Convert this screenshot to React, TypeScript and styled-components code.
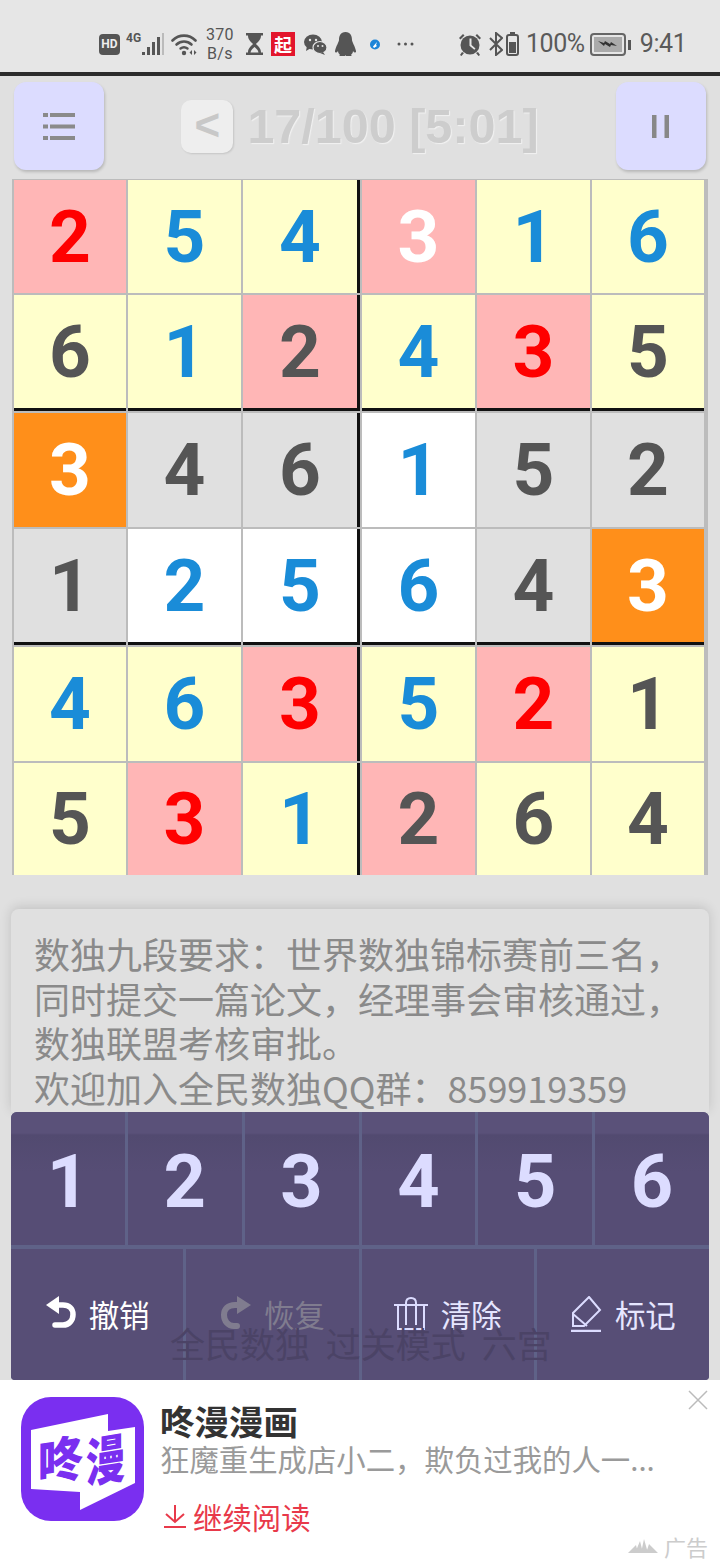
import React from "react";
import styled, { createGlobalStyle } from "styled-components";

const GlobalStyle = createGlobalStyle`
  html, body {
    margin: 0;
    padding: 0;
    background: #e0e0e0;
  }
  * {
    box-sizing: border-box;
  }
`;

const cjk = `"Noto Sans CJK SC", "Noto Sans", sans-serif`;

const Page = styled.div`
  width: 720px;
  height: 1560px;
  overflow: hidden;
  background: #e0e0e0;
  font-family: Roboto, ${cjk};
`;

/* status bar */
const StatusBar = styled.div`
  height: 76px;
  padding: 16px 0 0 0;
  background: #e6e6e6;
  border-bottom: 4px solid #2c2c2c;
  display: flex;
  align-items: center;
  color: #555;
`;

const Slot = styled.div<{ $left: number }>`
  margin-left: ${(p) => p.$left}px;
  display: flex;
  align-items: center;
  flex-shrink: 0;
`;

const HdBadge = styled.div`
  width: 21px;
  height: 21px;
  border-radius: 4px;
  background: #555;
  color: #eee;
  font-size: 12px;
  font-weight: 700;
  display: flex;
  align-items: center;
  justify-content: center;
`;

const Speed = styled.div`
  font-size: 16px;
  line-height: 19px;
  text-align: center;
  letter-spacing: 0.3px;
`;

const QiBadge = styled.div`
  width: 24px;
  height: 24px;
  background: #e3152c;
  color: #fff;
  font-family: ${cjk};
  font-size: 18px;
  font-weight: 700;
  line-height: 24px;
  text-align: center;
`;

const StatusText = styled.div`
  font-size: 25px;
  letter-spacing: -0.4px;
  line-height: 30px;
  color: #5a5a5a;
`;

/* header */
const Header = styled.div`
  height: 103px;
  padding: 6px 14px 9px;
  display: flex;
  align-items: stretch;
  justify-content: space-between;
`;

const SquareButton = styled.div`
  width: 90px;
  border-radius: 12px;
  background: #dcdcff;
  box-shadow: 1px 2px 3px rgba(0, 0, 0, 0.18);
  display: flex;
  align-items: center;
  justify-content: center;
`;

const TitleGroup = styled.div`
  display: flex;
  align-items: center;
  gap: 14px;
`;

const BackButton = styled.div`
  width: 52px;
  height: 53px;
  border-radius: 10px;
  background: #eeeeee;
  box-shadow: 1px 1px 2px rgba(0, 0, 0, 0.12);
  color: #c8c8c8;
  font-family: "Liberation Sans", sans-serif;
  font-size: 44px;
  font-weight: 700;
  line-height: 50px;
  text-align: center;
`;

const Title = styled.div`
  font-family: "Liberation Sans", sans-serif;
  font-size: 48.5px;
  font-weight: 700;
  color: #cdcdcd;
  text-shadow: 1px 1px 1px #f2f2f2;
  white-space: nowrap;
`;

/* board */
const Board = styled.div`
  margin: 0 12px;
  width: 696px;
  height: 696px;
  padding: 1px 4px 0 2px;
  background: #bcbcbc;
  display: grid;
  grid-template-columns: 112px 113px 117px 113px 113px 112px;
  grid-template-rows: 113px 116px 114px 116px 114px 112px;
  gap: 2px;
`;

const tones: Record<string, string> = {
  p: "#ffb6b6",
  y: "#ffffcc",
  o: "#ff8f1a",
  g: "#e0e0e0",
  w: "#ffffff",
};

const inks: Record<string, string> = {
  r: "#ff0000",
  b: "#1a8cd8",
  d: "#555555",
  w: "#ffffff",
};

const Cell = styled.div<{ $tone: string; $ink: string; $right: boolean; $bottom: boolean }>`
  background: ${(p) => tones[p.$tone]};
  color: ${(p) => inks[p.$ink]};
  border-right: ${(p) => (p.$right ? "3px solid #111" : "none")};
  border-bottom: ${(p) => (p.$bottom ? "3px solid #111" : "none")};
  font-size: 73px;
  font-weight: 700;
  display: flex;
  align-items: center;
  justify-content: center;
`;

/* notice */
const Notice = styled.div`
  margin: 34px 11px 0;
  height: 203px;
  padding: 22px 0 0 23px;
  border-radius: 8px 8px 0 0;
  background: #e0e0e0;
  box-shadow: 0 -2px 12px rgba(0, 0, 0, 0.14);
  color: #8a8a8a;
  font-family: ${cjk};
  font-size: 36px;
  line-height: 44.6px;
  white-space: nowrap;
`;

const NoticeLine = styled.div``;

/* keypad */
const Keypad = styled.div`
  position: relative;
  margin: 0 11px;
  height: 268px;
  border-radius: 6px 6px 4px 4px;
  overflow: hidden;
  background: #5f6288;
  display: flex;
  flex-direction: column;
  gap: 4px;
`;

const DigitRow = styled.div`
  height: 133px;
  display: grid;
  grid-template-columns: repeat(6, 1fr);
  gap: 3px;
`;

const DigitKey = styled.div`
  background: linear-gradient(#5a5179 0, #5a5179 21px, #524a70 23px, #564d75 60px);
  color: #dcdcff;
  font-size: 74px;
  font-weight: 700;
  display: flex;
  align-items: center;
  justify-content: center;
  padding-top: 6px;
`;

const ActionRow = styled.div`
  flex: 1;
  display: grid;
  grid-template-columns: repeat(4, 1fr);
  gap: 3px;
`;

const ActionKey = styled.div<{ $color: string }>`
  background: #574e76;
  color: ${(p) => p.$color};
  font-family: ${cjk};
  font-size: 30.5px;
  display: flex;
  align-items: center;
  justify-content: center;
  gap: 13px;
  padding-bottom: 2px;
`;

const Watermark = styled.div`
  position: absolute;
  left: 159px;
  top: 207px;
  font-family: ${cjk};
  font-size: 35px;
  line-height: 48px;
  word-spacing: 8px;
  color: #4b4366;
  white-space: nowrap;
  pointer-events: none;
`;

/* ad */
const Ad = styled.div`
  position: relative;
  height: 180px;
  background: #ffffff;
  padding: 17px 0 0 21px;
  display: flex;
  gap: 16px;
`;

const AdBody = styled.div`
  display: flex;
  flex-direction: column;
  font-family: ${cjk};
`;

const AdTitle = styled.div`
  font-size: 34.5px;
  font-weight: 700;
  line-height: 46px;
  color: #333333;
`;

const AdSubtitle = styled.div`
  font-size: 29.4px;
  line-height: 40px;
  margin-top: -5px;
  color: #9a9a9a;
  white-space: nowrap;
`;

const AdLink = styled.div`
  margin-top: 18px;
  padding-left: 4px;
  display: flex;
  align-items: center;
  gap: 7px;
  font-size: 29.4px;
  line-height: 40px;
  color: #e8394a;
`;

const AdClose = styled.svg`
  position: absolute;
  right: 12px;
  top: 10px;
`;

const AdLabel = styled.div`
  position: absolute;
  right: 12px;
  bottom: 1px;
  display: flex;
  align-items: center;
  gap: 6px;
  font-family: ${cjk};
  font-size: 22px;
  line-height: 26px;
  color: #cccccc;
`;

const board = [
  "pr2 yb5 yb4 pw3 yb1 yb6",
  "yd6 yb1 pd2 yb4 pr3 yd5",
  "ow3 gd4 gd6 wb1 gd5 gd2",
  "gd1 wb2 wb5 wb6 gd4 ow3",
  "yb4 yb6 pr3 yb5 pr2 yd1",
  "yd5 pr3 yb1 pd2 yd6 yd4",
].map((row) => row.split(" "));

const SignalIcon = () => (
  <svg width="38" height="24" viewBox="0 0 38 24">
    <text x="0" y="10" fontFamily="Roboto, sans-serif" fontSize="12" fontWeight="700" fill="#555">4G</text>
    <rect x="16" y="20" width="3" height="3" fill="#555" />
    <rect x="21" y="15" width="3" height="8" fill="#555" />
    <rect x="26" y="10" width="3" height="13" fill="#555" />
    <rect x="31" y="5" width="3" height="18" fill="#555" />
    <rect x="36" y="1" width="2" height="22" fill="#bbb" />
  </svg>
);

const WifiIcon = () => (
  <svg width="27" height="24" viewBox="0 0 27 24" fill="none" stroke="#555" strokeLinecap="round">
    <path d="M1.5 8.5C8 2 18 2 24.5 8.5" strokeWidth="2.6" />
    <path d="M5.5 12.5C10 8.5 16 8.5 20.5 12.5" strokeWidth="2.6" />
    <path d="M9.5 16.5C11.5 15 14.5 15 16.5 16.5" strokeWidth="2.4" />
    <circle cx="13" cy="21" r="2.2" fill="#555" stroke="none" />
    <path d="M21 18l-2.5 2.5 2.5 2.5zM23 18l2.5 2.5-2.5 2.5z" fill="#555" stroke="none" />
  </svg>
);

const HourglassIcon = () => (
  <svg width="17" height="22" viewBox="0 0 17 22">
    <path d="M0 0h17v2.5h-2c0 4-2.5 6-5 8.5 2.500 2.500 5 4.500 5 8.500h2V22H0v-2.500h2c0-4 2.500-6 5-8.500-2.500-2.500-5-4.500-5-8.500H0z" fill="#555" />
    <path d="M4.500 19.500c.5-2.500 2-4 4-5.500 2 1.500 3.500 3 4 5.500z" fill="#e6e6e6" />
  </svg>
);

const WechatIcon = () => (
  <svg width="23" height="21" viewBox="0 0 23 21">
    <ellipse cx="9" cy="8" rx="9" ry="7.500" fill="#555" />
    <path d="M3 12l-1 5 5-3z" fill="#555" />
    <ellipse cx="16" cy="13.500" rx="7" ry="6" fill="#555" stroke="#e6e6e6" strokeWidth="1.200" />
    <path d="M19 18l2 3-5-2z" fill="#555" />
    <circle cx="6" cy="6" r="1.200" fill="#e6e6e6" />
    <circle cx="12" cy="6" r="1.200" fill="#e6e6e6" />
    <circle cx="14" cy="12" r="1" fill="#e6e6e6" />
    <circle cx="18.500" cy="12" r="1" fill="#e6e6e6" />
  </svg>
);

const PenguinIcon = () => (
  <svg width="21" height="24" viewBox="0 0 21 24">
    <path d="M10.500 0C15.500 0 17 4 17 8c0 2 3 6 4 11 .3 2-1.500 2-3 0 0 2-1 3-2 3.500 1 .5 1 1.500-1 1.500h-4l-.500-1-.500 1h-4c-2 0-2-1-1-1.500-1-.5-2-1.500-2-3.500-1.500 2-3.300 2-3 0 1-5 4-9 4-11 0-4 1.500-8 6.500-8z" fill="#555" />
  </svg>
);

const BlueDot = () => (
  <svg width="10" height="11" viewBox="0 0 10 11">
    <circle cx="5" cy="5.500" r="5" fill="#1b84d8" />
    <path d="M3 7.500l4-4.500-1 3 1 1-3 2z" fill="#fff" />
  </svg>
);

const MoreDots = () => (
  <svg width="17" height="4" viewBox="0 0 17 4" fill="#555">
    <circle cx="2" cy="2" r="1.500" />
    <circle cx="8.500" cy="2" r="1.500" />
    <circle cx="15" cy="2" r="1.500" />
  </svg>
);

const AlarmIcon = () => (
  <svg width="24" height="24" viewBox="0 0 24 24" fill="#555">
    <circle cx="12" cy="13" r="9.500" />
    <path d="M1 6l4-4 1.500 1.500-4 4zM23 6l-4-4-1.500 1.500 4 4zM4 20l-2 3 1.500 1 2.500-3zM20 20l2 3-1.500 1-2.500-3z" />
    <path d="M11.500 6.500h2v6.500l4 3.500-1.200 1.300-4.800-4z" fill="#e6e6e6" />
  </svg>
);

const BluetoothIcon = () => (
  <svg width="14" height="24" viewBox="0 0 14 24" fill="none" stroke="#555" strokeWidth="2">
    <path d="M1 6l12 12-6 5V1l6 5L1 18" />
  </svg>
);

const SmallBattery = () => (
  <svg width="13" height="24" viewBox="0 0 13 24">
    <rect x="4" y="0" width="5" height="2" fill="#555" />
    <rect x="1" y="3" width="11" height="20" rx="2" fill="none" stroke="#555" strokeWidth="2" />
    <rect x="3" y="10" width="7" height="11" fill="#555" />
  </svg>
);

const BigBattery = () => (
  <svg width="41" height="23" viewBox="0 0 41 23">
    <rect x="1" y="1" width="34" height="21" rx="3" fill="none" stroke="#666" strokeWidth="2" />
    <rect x="4" y="4" width="28" height="15" fill="#aaa" />
    <path d="M8 8l6 2 1-2 5 3 1-2 6 4-6-1-1 2-5-3-1 2z" fill="#333" />
    <rect x="38" y="7" width="3" height="10" fill="#555" />
  </svg>
);

const MenuIcon = () => (
  <svg width="32" height="27" viewBox="0 0 32 27" fill="#8a8a8a">
    <rect x="0" y="0" width="5" height="4" />
    <rect x="7" y="0" width="25" height="4" />
    <rect x="0" y="11.500" width="5" height="4" />
    <rect x="7" y="11.500" width="25" height="4" />
    <rect x="0" y="23" width="5" height="4" />
    <rect x="7" y="23" width="25" height="4" />
  </svg>
);

const PauseIcon = () => (
  <svg width="17" height="23" viewBox="0 0 17 23" fill="#888888">
    <rect x="0" y="0" width="4.500" height="23" />
    <rect x="12.500" y="0" width="4.500" height="23" />
  </svg>
);

const UndoIcon = () => (
  <svg width="31" height="35" viewBox="0 0 31 35" fill="none">
    <path d="M12 9h6c6 0 10 3.500 10 9.500S24 29 18 29h-8" stroke="#fff" strokeWidth="5.500" strokeLinecap="round" />
    <path d="M14 0v18L1 9z" fill="#fff" />
  </svg>
);

const RedoIcon = () => (
  <svg width="31" height="35" viewBox="0 0 31 35" fill="none">
    <path d="M19 9h-4C8 9 4 13 4 19s4 11 10 11h3" stroke="#807c8f" strokeWidth="6" strokeLinecap="round" />
    <path d="M17 0v18L31 9z" fill="#807c8f" />
  </svg>
);

const ClearIcon = () => (
  <svg width="34" height="33" viewBox="0 0 34 33" fill="none" stroke="#dcdcff" strokeWidth="2">
    <path d="M0 8h34M4 8v24h26V8" />
    <path d="M12 28V6c0-3 2-5 5-5s5 2 5 5v22" />
  </svg>
);

const MarkIcon = () => (
  <svg width="32" height="36" viewBox="0 0 32 36" fill="none" stroke="#dcdcff" strokeWidth="2">
    <path d="M19 1l11 13-16 16H3V17z" />
    <path d="M3 18l14 12" />
    <path d="M1 35h30" strokeWidth="2.500" />
  </svg>
);

const AppLogo = () => (
  <svg width="123" height="124" viewBox="0 0 123 124">
    <rect width="123" height="124" rx="30" fill="#7a2ff0" />
    <path d="M10 33L87 17V34L114 30V86L59 113V95L10 92z" fill="#fff" />
    <g transform="skewY(-9)" fill="#7a2ff0" fontFamily={cjk} fontWeight="900">
      <text transform="translate(17 88) scale(1 1.1)" fontSize="45">咚</text>
      <text transform="translate(65 96) scale(.85 1.15)" fontSize="46">漫</text>
    </g>
  </svg>
);

const DownArrow = () => (
  <svg width="22" height="24" viewBox="0 0 22 24" fill="none" stroke="#e8394a" strokeWidth="2">
    <path d="M11 1v17M2 10l9 8 9-8M0 23h22" />
  </svg>
);

const HillsIcon = () => (
  <svg width="30" height="14" viewBox="0 0 30 14" fill="#cccccc">
    <path d="M0 14L8 6l2 8zM7 14l5-12 3 12zM13 14l3-14 4 14zM18 14l3-9 9 9z" />
  </svg>
);

export default function App() {
  return (
    <Page>
      <GlobalStyle />
      <StatusBar>
        <Slot $left={99}><HdBadge>HD</HdBadge></Slot>
        <Slot $left={6}><SignalIcon /></Slot>
        <Slot $left={7}><WifiIcon /></Slot>
        <Slot $left={8}><Speed>370<br />B/s</Speed></Slot>
        <Slot $left={12}><HourglassIcon /></Slot>
        <Slot $left={8}><QiBadge>起</QiBadge></Slot>
        <Slot $left={9}><WechatIcon /></Slot>
        <Slot $left={8}><PenguinIcon /></Slot>
        <Slot $left={14}><BlueDot /></Slot>
        <Slot $left={17}><MoreDots /></Slot>
        <Slot $left={44}><AlarmIcon /></Slot>
        <Slot $left={7}><BluetoothIcon /></Slot>
        <Slot $left={3}><SmallBattery /></Slot>
        <Slot $left={7}><StatusText>100%</StatusText></Slot>
        <Slot $left={5}><BigBattery /></Slot>
        <Slot $left={9}><StatusText>9:41</StatusText></Slot>
      </StatusBar>

      <Header>
        <SquareButton><MenuIcon /></SquareButton>
        <TitleGroup>
          <BackButton>&lt;</BackButton>
          <Title>17/100 [5:01]</Title>
        </TitleGroup>
        <SquareButton><PauseIcon /></SquareButton>
      </Header>

      <Board>
        {board.flatMap((row, r) =>
          row.map((cell, c) => (
            <Cell
              key={`${r}-${c}`}
              $tone={cell[0]}
              $ink={cell[1]}
              $right={c === 2}
              $bottom={r === 1 || r === 3}
            >
              {cell[2]}
            </Cell>
          ))
        )}
      </Board>

      <Notice>
        <NoticeLine>数独九段要求：世界数独锦标赛前三名，</NoticeLine>
        <NoticeLine>同时提交一篇论文，经理事会审核通过，</NoticeLine>
        <NoticeLine>数独联盟考核审批。</NoticeLine>
        <NoticeLine>欢迎加入全民数独QQ群：859919359</NoticeLine>
      </Notice>

      <Keypad>
        <DigitRow>
          {[1, 2, 3, 4, 5, 6].map((n) => (
            <DigitKey key={n}>{n}</DigitKey>
          ))}
        </DigitRow>
        <ActionRow>
          <ActionKey $color="#ffffff"><UndoIcon />撤销</ActionKey>
          <ActionKey $color="#807c8f"><RedoIcon />恢复</ActionKey>
          <ActionKey $color="#e6e6ff"><ClearIcon />清除</ActionKey>
          <ActionKey $color="#e6e6ff"><MarkIcon />标记</ActionKey>
        </ActionRow>
        <Watermark>全民数独 过关模式 六宫</Watermark>
      </Keypad>

      <Ad>
        <AppLogo />
        <AdBody>
          <AdTitle>咚漫漫画</AdTitle>
          <AdSubtitle>狂魔重生成店小二，欺负过我的人一...</AdSubtitle>
          <AdLink><DownArrow />继续阅读</AdLink>
        </AdBody>
        <AdClose width="20" height="20" viewBox="0 0 20 20" fill="none" stroke="#bbbbbb" strokeWidth="1.500">
          <path d="M1 1l18 18M19 1L1 19" />
        </AdClose>
        <AdLabel><HillsIcon />广告</AdLabel>
      </Ad>
    </Page>
  );
}
